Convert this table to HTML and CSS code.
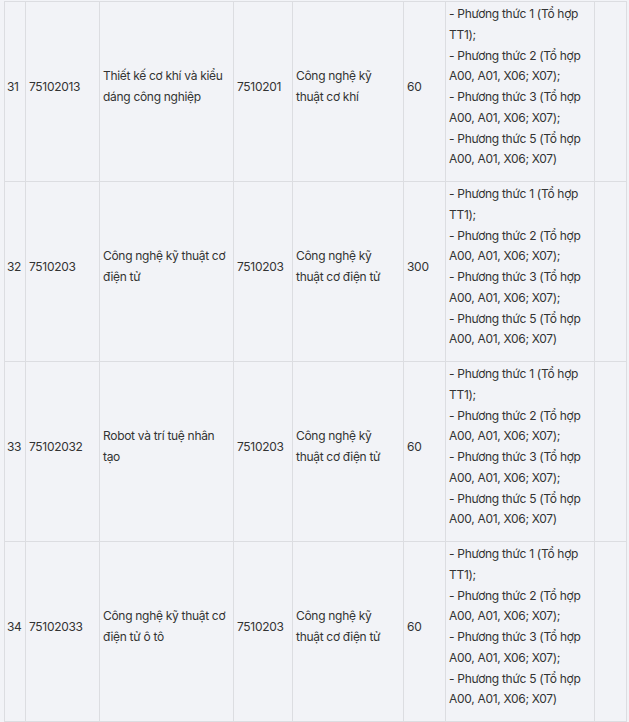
FILE: index.html
```html
<!DOCTYPE html>
<html lang="vi">
<head>
<meta charset="utf-8">
<title>Bảng ngành tuyển sinh</title>
<link rel="stylesheet" href="styles.css">
</head>
<body>
<table class="majors">
  <colgroup>
    <col class="c-stt">
    <col class="c-code">
    <col class="c-name">
    <col class="c-group">
    <col class="c-gname">
    <col class="c-quota">
    <col class="c-method">
    <col class="c-note">
  </colgroup>
  <tbody>
    <tr>
      <td class="stt">31</td>
      <td>75102013</td>
      <td>Thiết kế cơ khí và kiểu dáng công nghiệp</td>
      <td>7510201</td>
      <td>Công nghệ kỹ thuật cơ khí</td>
      <td>60</td>
      <td>- Phương thức 1 (Tổ hợp TT1);<br>- Phương thức 2 (Tổ hợp A00, A01, X06; X07);<br>- Phương thức 3 (Tổ hợp A00, A01, X06; X07);<br>- Phương thức 5 (Tổ hợp A00, A01, X06; X07)</td>
      <td></td>
    </tr>
    <tr>
      <td class="stt">32</td>
      <td>7510203</td>
      <td>Công nghệ kỹ thuật cơ điện tử</td>
      <td>7510203</td>
      <td>Công nghệ kỹ thuật cơ điện tử</td>
      <td>300</td>
      <td>- Phương thức 1 (Tổ hợp TT1);<br>- Phương thức 2 (Tổ hợp A00, A01, X06; X07);<br>- Phương thức 3 (Tổ hợp A00, A01, X06; X07);<br>- Phương thức 5 (Tổ hợp A00, A01, X06; X07)</td>
      <td></td>
    </tr>
    <tr>
      <td class="stt">33</td>
      <td>75102032</td>
      <td>Robot và trí tuệ nhân tạo</td>
      <td>7510203</td>
      <td>Công nghệ kỹ thuật cơ điện tử</td>
      <td>60</td>
      <td>- Phương thức 1 (Tổ hợp TT1);<br>- Phương thức 2 (Tổ hợp A00, A01, X06; X07);<br>- Phương thức 3 (Tổ hợp A00, A01, X06; X07);<br>- Phương thức 5 (Tổ hợp A00, A01, X06; X07)</td>
      <td></td>
    </tr>
    <tr>
      <td class="stt">34</td>
      <td>75102033</td>
      <td>Công nghệ kỹ thuật cơ điện tử ô tô</td>
      <td>7510203</td>
      <td>Công nghệ kỹ thuật cơ điện tử</td>
      <td>60</td>
      <td>- Phương thức 1 (Tổ hợp TT1);<br>- Phương thức 2 (Tổ hợp A00, A01, X06; X07);<br>- Phương thức 3 (Tổ hợp A00, A01, X06; X07);<br>- Phương thức 5 (Tổ hợp A00, A01, X06; X07)</td>
      <td></td>
    </tr>
  </tbody>
</table>
</body>
</html>
```
FILE: styles.css
```css
html, body {
  margin: 0;
  padding: 0;
  background: #f2f3f7;
}

body {
  padding: 1px 0 0 4px;
  font-family: Inter, "Noto Sans", "Liberation Sans", sans-serif;
  font-size: 12px;
  line-height: 20.75px;
  letter-spacing: -0.3px;
  color: #333333;
}

.majors {
  border-collapse: collapse;
  table-layout: fixed;
  width: 623px;
}

.majors td {
  border: 1px solid #dcdde1;
  padding: 2px 3px 11px 3px;
  vertical-align: middle;
  text-align: left;
  overflow-wrap: break-word;
}

.majors td.stt {
  padding-left: 2px;
  padding-right: 1px;
  white-space: nowrap;
}

.majors tr {
  height: 180px;
}

.c-stt { width: 21px; }
.c-code { width: 74px; }
.c-name { width: 134px; }
.c-group { width: 59px; }
.c-gname { width: 111px; }
.c-quota { width: 42px; }
.c-method { width: 149px; }
.c-note { width: 32px; }
```
